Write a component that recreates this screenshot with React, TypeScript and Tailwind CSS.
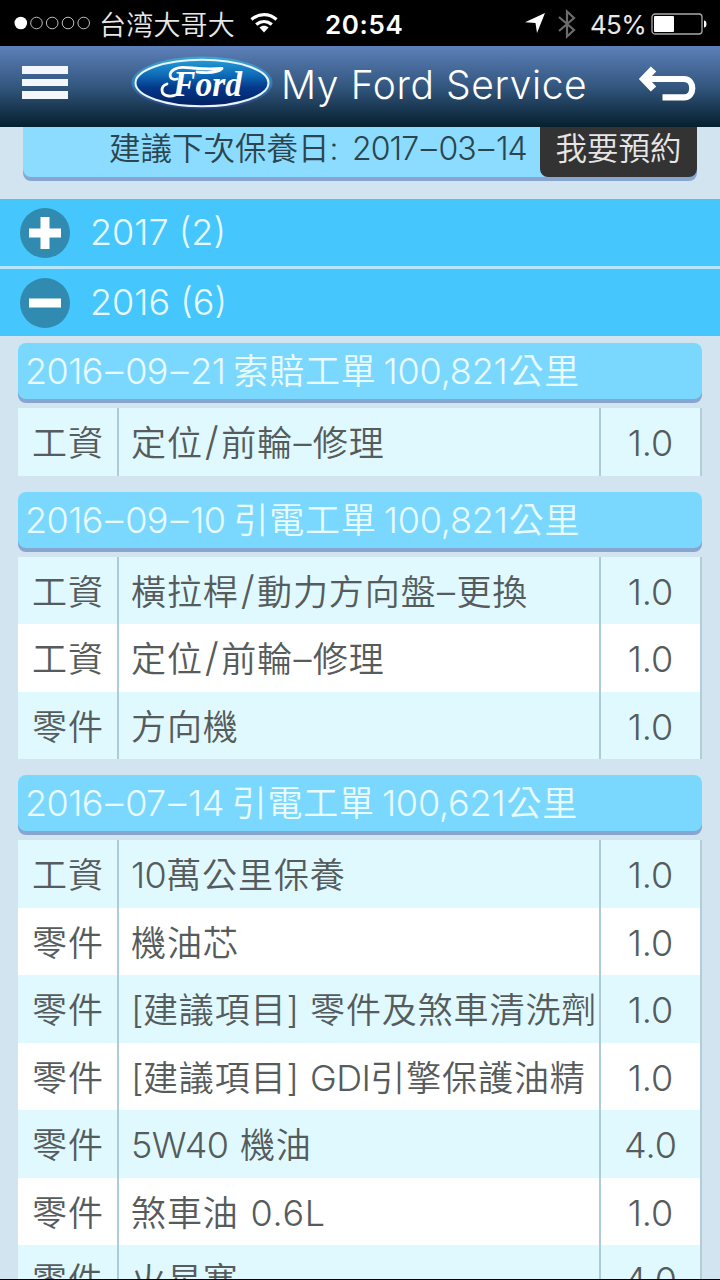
import React from "react";

const jobs = [
  {
    date: "2016–09–21",
    kind: "索賠工單",
    km: "100,821",
    items: [["工資", "定位/前輪–修理", "1.0"]],
  },
  {
    date: "2016–09–10",
    kind: "引電工單",
    km: "100,821",
    items: [
      ["工資", "橫拉桿/動力方向盤–更換", "1.0"],
      ["工資", "定位/前輪–修理", "1.0"],
      ["零件", "方向機", "1.0"],
    ],
  },
  {
    date: "2016–07–14",
    kind: "引電工單",
    km: "100,621",
    items: [
      ["工資", "10萬公里保養", "1.0"],
      ["零件", "機油芯", "1.0"],
      ["零件", "[建議項目] 零件及煞車清洗劑", "1.0"],
      ["零件", "[建議項目] GDI引擎保護油精", "1.0"],
      ["零件", "5W40 機油", "4.0"],
      ["零件", "煞車油 0.6L", "1.0"],
      ["零件", "火星塞", "4.0"],
    ],
  },
];

const latinStyle = (part: string) => {
  if (part === "/") return "pl-[2px] pr-[1.500px] text-[40px] leading-none";
  if (part === "–") return "px-[0.500px] text-[36px]";
  if (part.includes(".")) return "text-[36px] tracking-[0.7px] [word-spacing:1px]";
  return "text-[36px] tracking-[-0.6px] [word-spacing:2px]";
};

// Latin runs are set a little tighter than the Chinese ones
const Mixed = ({ text }: { text: string }) => (
  <>
    {text.split(/([\u4e00-\u9fff]+)/).map((part, i) =>
      i % 2 ? (
        <span key={i}>{part}</span>
      ) : (
        part && (
          <span key={i} className={latinStyle(part)}>
            {part}
          </span>
        )
      )
    )}
  </>
);

const DateText = ({ text }: { text: string }) => (
  <>
    {text.split("–").map((part, i) => (
      <React.Fragment key={i}>
        {i > 0 && <span className="px-[2.500px]">–</span>}
        {part}
      </React.Fragment>
    ))}
  </>
);

const StatusBar = () => (
  <div className="flex h-[46px] shrink-0 items-center bg-black pl-[14px] text-[#e8e8e8] *:shrink-0">
    <svg width="78" height="16" viewBox="0 0 78 16" fill="none">
      <circle cx="6.8" cy="8" r="6.3" fill="white" />
      {[22.5, 38.2, 54, 69.7].map((x) => (
        <circle key={x} cx={x} cy="8" r="5.8" stroke="#bdbdbd" strokeWidth="1" />
      ))}
    </svg>
    <span className="ml-[7px] w-[138px] pt-[5px] text-[27px] leading-[46px] font-[350] tracking-[0.2px]">
      台湾大哥大
    </span>
    <svg
      className="ml-[12px]"
      width="30"
      height="22"
      viewBox="0 0 30 22"
      fill="none"
      stroke="white"
      strokeWidth="3.2"
    >
      <path d="M2.500 7.500C10 1 20 1 27.500 7.500" />
      <path d="M7.200 12.500C12 8.500 18 8.500 22.800 12.500" />
      <path d="M15 20.500L10.500 15.500C13.200 13.200 16.800 13.200 19.500 15.500Z" fill="white" stroke="none" />
    </svg>
    <span className="ml-[46px] w-[80px] pt-[2px] text-[26px] font-semibold tracking-[0.6px] text-white">
      20:54
    </span>
    <svg className="ml-[119px]" width="22" height="22" viewBox="0 0 22 22" fill="white">
      <path d="M21 1L13 21L11.500 11L1 10.200Z" />
    </svg>
    <svg
      className="ml-[11px] mt-[2px]"
      width="20"
      height="32"
      viewBox="0 0 20 32"
      fill="none"
      stroke="#6c6c6c"
      strokeWidth="2.2"
    >
      <path d="M2 9L17 22L10 28.500V3.500L17 10L2 23" />
    </svg>
    <span className="ml-[13px] w-[56px] pt-[2px] text-[26px] font-normal tracking-[-0.7px]">
      45%
    </span>
    <svg className="ml-[5px] mt-[2px]" width="57" height="24" viewBox="0 0 57 24" fill="none">
      <rect x="1" y="2" width="50" height="20" rx="3" stroke="#a8a8a8" strokeWidth="1.3" />
      <rect x="3" y="4" width="20" height="16" rx="1" fill="white" />
      <path d="M53 8.500V15.500C56.300 15.500 56.300 8.500 53 8.500Z" fill="white" />
    </svg>
  </div>
);

const FordLogo = () => (
  <svg width="142" height="54" viewBox="0 0 142 54">
    <defs>
      <linearGradient id="oval" x1="0" y1="0" x2="0" y2="1">
        <stop offset="0" stopColor="#239bd8" />
        <stop offset="0.35" stopColor="#0d68b4" />
        <stop offset="0.6" stopColor="#04388a" />
        <stop offset="1" stopColor="#05205f" />
      </linearGradient>
      <linearGradient id="rim" x1="0" y1="0" x2="0" y2="1">
        <stop offset="0" stopColor="#3da4cf" />
        <stop offset="0.5" stopColor="#357fb9" />
        <stop offset="1" stopColor="#243a72" />
      </linearGradient>
    </defs>
    <ellipse cx="71" cy="27" rx="70.5" ry="26.5" fill="url(#rim)" />
    <ellipse cx="71" cy="27" rx="66.5" ry="23.3" fill="url(#oval)" stroke="#e8f3fb" strokeWidth="2" />
    <text
      x="42"
      y="40"
      fontFamily="Liberation Serif, serif"
      fontSize="36"
      fontWeight="bold"
      fontStyle="italic"
      fill="white"
      textLength="69"
      lengthAdjust="spacingAndGlyphs"
    >
      Ford
    </text>
    {/* flourishes around the lettering */}
    <path
      d="M46 23C38 25 37 17 43 13.500C52 8 64 15 91 12.500C87 17 76 17 66 16M48 37C42 42 31 41 31 34C31 31 33 29 36 28"
      fill="none"
      stroke="white"
      strokeWidth="2.8"
      strokeLinecap="round"
      strokeLinejoin="round"
    />
  </svg>
);

const Header = () => (
  <header className="flex h-[81px] shrink-0 items-start bg-linear-to-b from-[#5d80ba] via-[#33577f] to-[#06202f] pl-[22px] *:shrink-0">
    <div className="mt-[20px] flex flex-col gap-[5px]">
      <div className="h-[7.5px] w-[46px] bg-[#f3f6fb]" />
      <div className="h-[7.5px] w-[46px] bg-[#f3f6fb]" />
      <div className="h-[7.5px] w-[46px] bg-[#f3f6fb]" />
    </div>
    <div className="ml-[63px] mt-[10px]">
      <FordLogo />
    </div>
    <h1 className="ml-[8px] mt-[15px] w-[306px] whitespace-nowrap text-[39px] leading-[48px] tracking-[0.6px] text-white">
      My Ford Service
    </h1>
    <svg
      className="ml-[51px] mt-[19px]"
      width="60"
      height="38"
      viewBox="0 0 60 38"
      fill="none"
      stroke="white"
      strokeWidth="6.200"
    >
      <path d="M6 14H46C57 14 57 32.300 46 32.300H24.500" />
      <path d="M15.500 4L6 14L15.500 24" strokeWidth="7.500" />
    </svg>
  </header>
);

const YearRow = ({ label, open }: { label: string; open?: boolean }) => (
  <div className="flex h-[67px] items-center bg-[#45c6fc] pl-[20px]">
    <div className="flex h-[50px] w-[50px] items-center justify-center rounded-full bg-[#318bb0]">
      <svg width="32" height="32" viewBox="0 0 32 32" fill="white">
        <rect x="0" y="11.500" width="32" height="9" />
        {!open && <rect x="11.500" y="0" width="9" height="32" />}
      </svg>
    </div>
    <span className="ml-[20px] pb-[2px] text-[36px] tracking-[0px] text-[#e8fbff]">
      {label}
    </span>
  </div>
);

const JobCard = ({ job }: { job: (typeof jobs)[0] }) => (
  <section className="mb-[16px]">
    <h2 className="flex h-[56px] items-center rounded-[8px] bg-[#7ad8ff] pl-[7px] text-[35px] whitespace-nowrap text-[#e9fcff] shadow-[0_4px_0_#88a5d0]">
      <span className="text-[36px] tracking-[-0.600px]">
        <DateText text={job.date} />
      </span>
      <span className="ml-[8px] pt-[1px] tracking-[0.8px]">{job.kind}</span>
      <span className="ml-[7px] text-[36px] tracking-[-0.2px]">{job.km}</span>
      <span className="ml-[1px] pt-[1px] tracking-[0.8px]">公里</span>
    </h2>
    <div className="mt-[9px] border-r-2 border-[#b3cdd6]">
      {job.items.map(([type, name, qty], i) => (
        <div
          key={i}
          className="flex h-[67.500px] items-center text-[35px] leading-[71px] tracking-[0.9px] text-[#565b5c] odd:bg-[#dff9ff] even:bg-white"
        >
          <div className="h-full w-[101px] shrink-0 border-r-2 border-[#aecbd8] pl-[14px]">
            {type}
          </div>
          <div className="h-full w-[482px] shrink-0 overflow-hidden whitespace-nowrap border-r-2 border-[#aecbd8] pl-[12px]">
            <Mixed text={name} />
          </div>
          <div className="h-full grow text-center text-[36px] leading-[70px] tracking-normal">
            {qty}
          </div>
        </div>
      ))}
    </div>
  </section>
);

const App = () => {
  return (
    <div className="flex h-[1280px] w-[720px] flex-col overflow-hidden border-b border-black bg-[#d1e4f0] font-['Inter','Noto_Sans_CJK_TC',sans-serif] font-[350]">
      <StatusBar />
      <Header />
      <main className="min-h-0 grow overflow-hidden">
        <div className="mx-[23px] mb-[22px] flex h-[50px] rounded-b-[8px] bg-[#8bdcfe] text-[#2c444e] shadow-[0_4px_0_#88a5d0]">
          <div className="flex w-[517px] pl-[86px] text-[31.500px] leading-[44px] whitespace-nowrap">
            <span className="w-[243px]">建議下次保養日:</span>
            <span className="text-[32px] tracking-[-0.900px]">
              <DateText text="2017–03–14" />
            </span>
          </div>
          <div className="grow rounded-b-[8px] bg-[#333333] text-center text-[31.500px] leading-[44px] text-[#e6e6e6]">
            我要預約
          </div>
        </div>
        <div className="flex flex-col gap-[3px] bg-[#b8e6fa]">
          <YearRow label="2017 (2)" />
          <YearRow label="2016 (6)" open />
        </div>
        <div className="px-[18px] pt-[7px]">
          {jobs.map((job) => (
            <JobCard key={job.date} job={job} />
          ))}
        </div>
      </main>
    </div>
  );
};

export default App;
